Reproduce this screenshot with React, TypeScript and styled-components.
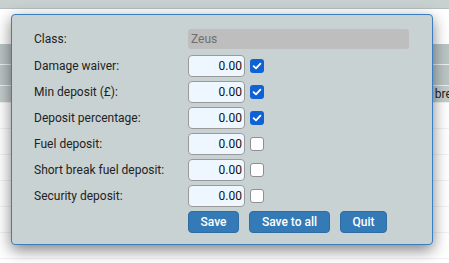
import React from "react";
import styled, { createGlobalStyle } from "styled-components";

const Global = createGlobalStyle`
  html, body { margin: 0; padding: 0; background: #fff; }
  body { font-family: Roboto, "Liberation Sans", Arial, sans-serif; font-size: 12px; color: #222; }
  * { box-sizing: border-box; }
`;

const Page = styled.div`
  position: relative;
  width: 449px;
  height: 263px;
  overflow: hidden;
  background: #fff;
`;

const TopBar = styled.div`
  height: 9px;
  background: #c8d0d0;
  border-bottom: 1px solid #b6bfbf;
`;

const Spacer = styled.div`
  height: 35px;
`;

const HeadRow = styled.div<{ $tone: string; $h: number }>`
  height: ${(p) => p.$h}px;
  background: ${(p) => p.$tone};
  border-bottom: 1px solid #eef1f1;
  display: grid;
  grid-template-columns: 194px 178px 1fr;
  align-items: center;
`;

const BodyRow = styled.div`
  height: 26px;
  border-bottom: 1px solid #f0f2f2;
  display: grid;
  grid-template-columns: 194px 178px 1fr;
  align-items: center;
`;

const Cell = styled.div<{ $pad?: number }>`
  padding-left: ${(p) => p.$pad ?? 28}px;
  white-space: nowrap;
  color: #222;
`;

const Dialog = styled.div`
  position: absolute;
  left: 11px;
  top: 14px;
  width: 422px;
  height: 231px;
  background: #c9d2d3;
  border: 1px solid #3a7dc0;
  border-radius: 4px;
  box-shadow: 0 5px 15px rgba(0, 0, 0, 0.5);
  padding: 14px 0 0 22px;
`;

const Form = styled.div`
  display: grid;
  grid-template-columns: 154px 57px 1fr;
  grid-auto-rows: 22px;
  row-gap: 4px;
  align-items: center;
`;

const Label = styled.div`
  color: #222;
  font-size: 12px;
  white-space: nowrap;
`;

const ClassRow = styled.div`
  display: contents;
`;

const ClassField = styled.div`
  grid-column: 2 / 4;
  width: 221px;
  height: 20px;
  align-self: start;
  background: #bebebe;
  border-radius: 3px;
  color: #707070;
  font-size: 12px;
  line-height: 20px;
  padding-left: 3px;
`;

const ClassLabel = styled(Label)`
  align-self: start;
  line-height: 20px;
`;

const NumInput = styled.input`
  width: 57px;
  height: 22px;
  border: 1px solid #9a9a9a;
  border-radius: 4px;
  background: #eef6ff;
  text-align: right;
  padding: 0 2px 0 2px;
  font-family: Roboto, "Liberation Sans", Arial, sans-serif;
  font-size: 12px;
  color: #111;
  outline: none;
`;

const CheckBox = styled.span<{ $on: boolean }>`
  display: inline-flex;
  align-items: center;
  justify-content: center;
  width: 14px;
  height: 14px;
  margin-left: 5px;
  border-radius: 3px;
  background: ${(p) => (p.$on ? "#0e62d6" : "#fff")};
  border: ${(p) => (p.$on ? "none" : "1.5px solid #8e8e96")};
`;

const ButtonRow = styled.div`
  grid-column: 2 / 4;
  display: flex;
  gap: 10px;
`;

const Button = styled.button<{ $w: number }>`
  width: ${(p) => p.$w}px;
  height: 22px;
  background: #337ab7;
  border: 1px solid #2e6da4;
  border-radius: 4px;
  color: #fff;
  font-family: Roboto, "Liberation Sans", Arial, sans-serif;
  font-size: 12px;
  font-weight: 500;
  padding: 0;
`;

const Check = ({ on }: { on: boolean }) => (
  <CheckBox $on={on}>
    {on && (
      <svg width="10" height="10" viewBox="0 0 10 10">
        <path d="M1.6 5.2 L4 7.4 L8.4 2.6" fill="none" stroke="#fff" strokeWidth="1.8" strokeLinecap="round" strokeLinejoin="round" />
      </svg>
    )}
  </CheckBox>
);

const rows: [string, boolean][] = [
  ["Damage waiver:", true],
  ["Min deposit (£):", true],
  ["Deposit percentage:", true],
  ["Fuel deposit:", false],
  ["Short break fuel deposit:", false],
  ["Security deposit:", false],
];

export default function App() {
  return (
    <>
      <Global />
      <Page>
        <TopBar />
        <Spacer />
        <HeadRow $tone="#bac4c5" $h={21} />
        <HeadRow $tone="#bac4c5" $h={21} />
        <HeadRow $tone="#c3cbcb" $h={17}>
          <Cell />
          <Cell />
          <Cell $pad={31}>Short break</Cell>
        </HeadRow>
        <BodyRow />
        <BodyRow />
        <BodyRow />
        <BodyRow />
        <BodyRow />
        <BodyRow />
        <BodyRow>
          <Cell>0.00</Cell>
          <Cell>0.00</Cell>
          <Cell>0.00</Cell>
        </BodyRow>
        <Dialog>
          <Form>
            <ClassRow>
              <ClassLabel>Class:</ClassLabel>
              <ClassField>Zeus</ClassField>
            </ClassRow>
            {rows.map(([label, on]) => (
              <React.Fragment key={label}>
                <Label>{label}</Label>
                <NumInput defaultValue="0.00" />
                <Check on={on} />
              </React.Fragment>
            ))}
            <ButtonRow>
              <Button $w={51}>Save</Button>
              <Button $w={81}>Save to all</Button>
              <Button $w={47}>Quit</Button>
            </ButtonRow>
          </Form>
        </Dialog>
      </Page>
    </>
  );
}
